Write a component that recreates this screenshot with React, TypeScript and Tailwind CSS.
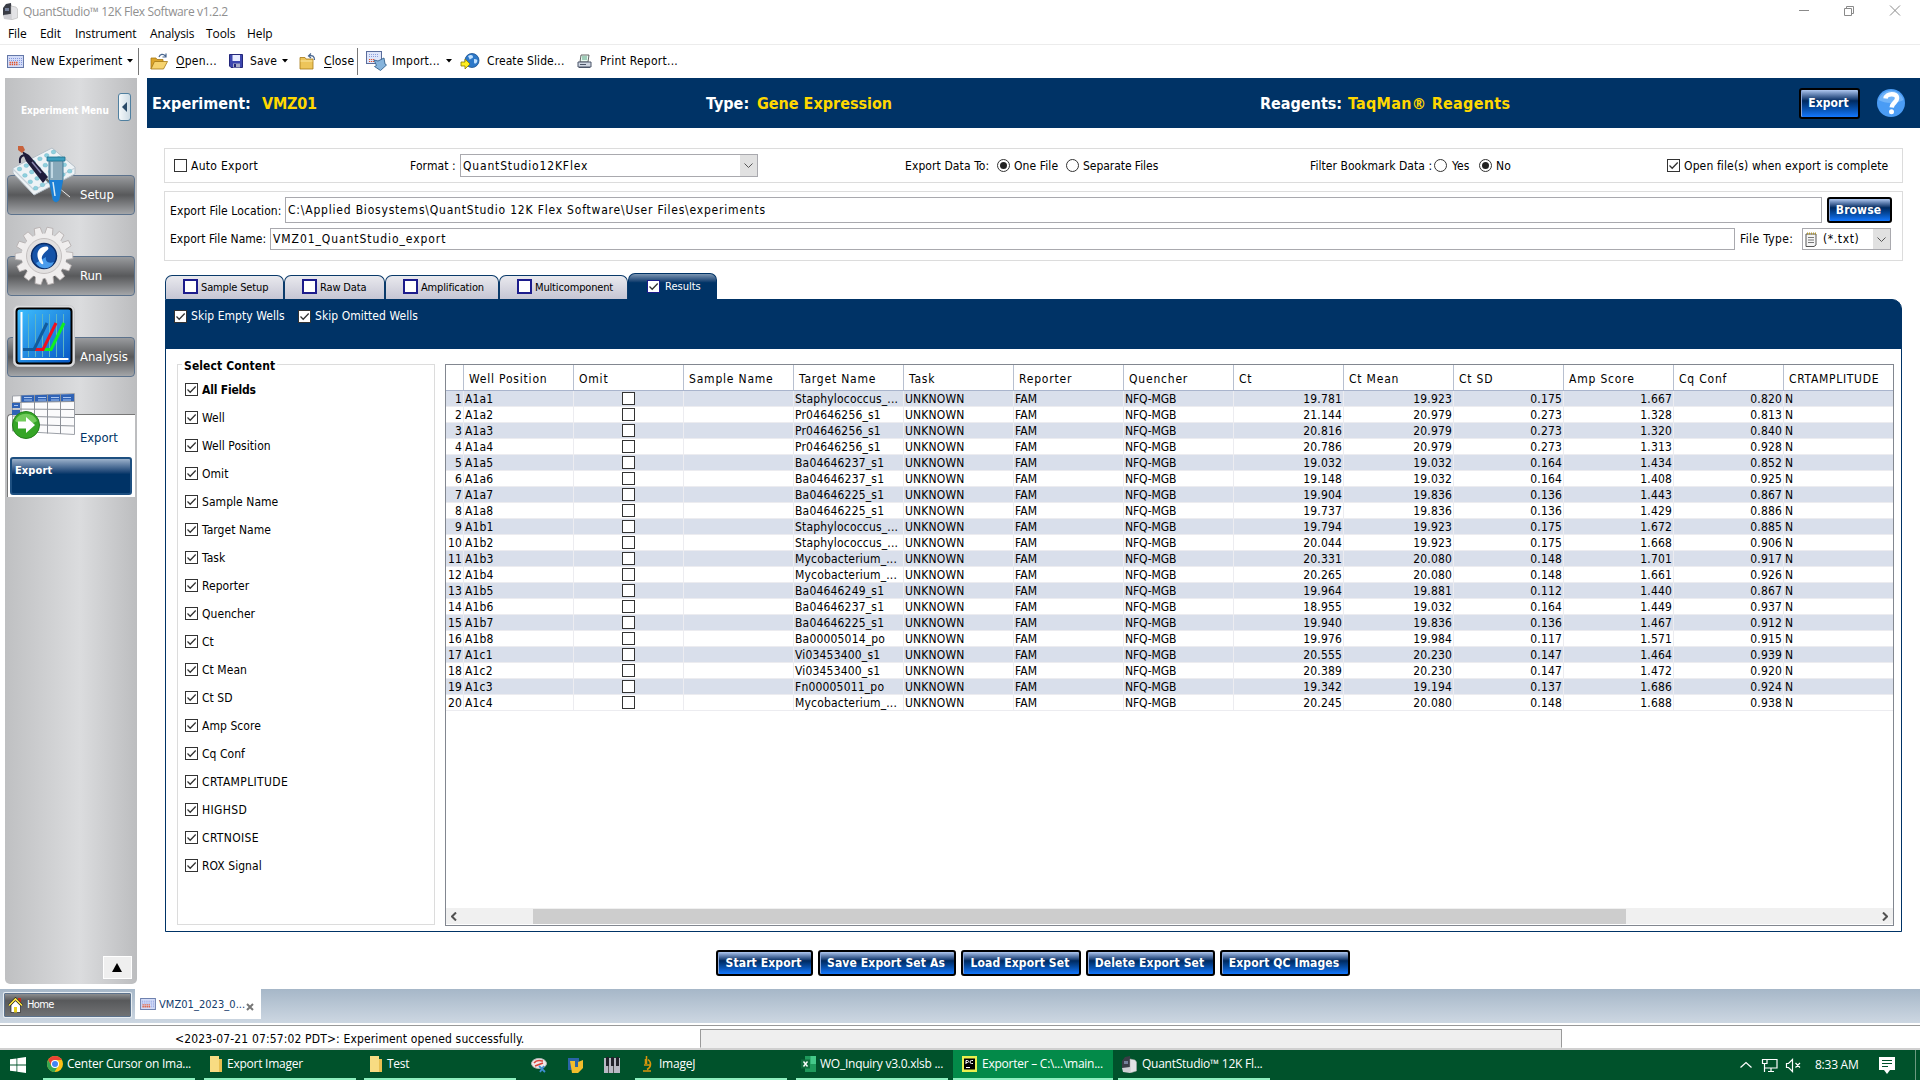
import React from "react";

const targets: [string, string, string, string, string, string, string][] = [
  ["A1a1", "Staphylococcus_...", "19.781", "19.923", "0.175", "1.667", "0.820"],
  ["A1a2", "Pr04646256_s1", "21.144", "20.979", "0.273", "1.328", "0.813"],
  ["A1a3", "Pr04646256_s1", "20.816", "20.979", "0.273", "1.320", "0.840"],
  ["A1a4", "Pr04646256_s1", "20.786", "20.979", "0.273", "1.313", "0.928"],
  ["A1a5", "Ba04646237_s1", "19.032", "19.032", "0.164", "1.434", "0.852"],
  ["A1a6", "Ba04646237_s1", "19.148", "19.032", "0.164", "1.408", "0.925"],
  ["A1a7", "Ba04646225_s1", "19.904", "19.836", "0.136", "1.443", "0.867"],
  ["A1a8", "Ba04646225_s1", "19.737", "19.836", "0.136", "1.429", "0.886"],
  ["A1b1", "Staphylococcus_...", "19.794", "19.923", "0.175", "1.672", "0.885"],
  ["A1b2", "Staphylococcus_...", "20.044", "19.923", "0.175", "1.668", "0.906"],
  ["A1b3", "Mycobacterium_...", "20.331", "20.080", "0.148", "1.701", "0.917"],
  ["A1b4", "Mycobacterium_...", "20.265", "20.080", "0.148", "1.661", "0.926"],
  ["A1b5", "Ba04646249_s1", "19.964", "19.881", "0.112", "1.440", "0.867"],
  ["A1b6", "Ba04646237_s1", "18.955", "19.032", "0.164", "1.449", "0.937"],
  ["A1b7", "Ba04646225_s1", "19.940", "19.836", "0.136", "1.467", "0.912"],
  ["A1b8", "Ba00005014_po", "19.976", "19.984", "0.117", "1.571", "0.915"],
  ["A1c1", "Vi03453400_s1", "20.555", "20.230", "0.147", "1.464", "0.939"],
  ["A1c2", "Vi03453400_s1", "20.389", "20.230", "0.147", "1.472", "0.920"],
  ["A1c3", "Fn00005011_po", "19.342", "19.194", "0.137", "1.686", "0.924"],
  ["A1c4", "Mycobacterium_...", "20.245", "20.080", "0.148", "1.688", "0.938"],
];

const columns = ["Well Position", "Omit", "Sample Name", "Target Name", "Task", "Reporter", "Quencher", "Ct", "Ct Mean", "Ct SD", "Amp Score", "Cq Conf", "CRTAMPLITUDE"];

const fields = ["All Fields", "Well", "Well Position", "Omit", "Sample Name", "Target Name", "Task", "Reporter", "Quencher", "Ct", "Ct Mean", "Ct SD", "Amp Score", "Cq Conf", "CRTAMPLITUDE", "HIGHSD", "CRTNOISE", "ROX Signal"];

function Check({ on = false, className = "border-[#333]" }: { on?: boolean; className?: string }) {
  return (
    <span className={"block size-[13px] shrink-0 border bg-white " + className}>
      {on && (
        <svg viewBox="0 0 11 11" className="block size-[11px]" fill="none" stroke="#333" strokeWidth="1.3">
          <path d="M1.5 5.5 4.2 8.2 9.7 2.5" />
        </svg>
      )}
    </span>
  );
}

function Radio({ on = false }: { on?: boolean }) {
  return (
    <span className="flex size-[13px] shrink-0 items-center justify-center rounded-full border border-[#333] bg-white">
      {on && <span className="size-[7px] rounded-full bg-[#222]" />}
    </span>
  );
}

function Gloss({ children, className = "" }: { children: React.ReactNode; className?: string }) {
  return (
    <button className={"flex shrink-0 items-center justify-center whitespace-nowrap rounded-[3px] border-2 border-black bg-linear-to-b from-[#b0c8f0] via-[#002a60] via-40% to-[#1478ff] pb-px pr-[2px] font-['DejaVu_Sans_Condensed','DejaVu_Sans',sans-serif] text-[12px] font-bold tracking-[0.12px] text-white shadow-[inset_1px_0_0_#8aa6d8] " + className}>
      {children}
    </button>
  );
}

function Caret({ className = "" }: { className?: string }) {
  return (
    <svg viewBox="0 0 6 4" className={"h-[4px] w-[6px] shrink-0 " + className}>
      <path d="M0 0h6L3 3.5z" fill="#000" />
    </svg>
  );
}

function PlateIcon({ className = "h-[13px] w-[17px]" }: { className?: string }) {
  return (
    <svg viewBox="0 0 17 13" className={"shrink-0 " + className}>
      <rect x=".5" y=".5" width="16" height="12" fill="#d3dcf8" stroke="#6478a8" />
      <path d="M2 3.500h13M2 5.500h13M12 7.500h3M12 9.500h3" stroke="#8496dc" strokeDasharray="1 1" />
      <path d="M2.500 7.500h8M2.500 9.500h9" stroke="#e0502a" strokeWidth="1.4" strokeDasharray="1.4 .8" />
    </svg>
  );
}

function FolderIcon({ className = "", close = false }: { className?: string; close?: boolean }) {
  return (
    <svg viewBox="0 0 18 17" className={"h-[17px] w-[18px] shrink-0 " + className}>
      {close ? (
        <>
          <path d="M1 4.500h5l1 1.500h7v10H1z" fill="#edc55a" stroke="#a77915" strokeWidth=".8" />
          <path d="M1.500 8h12" stroke="#fbe7a0" />
          <path d="M15.500 7c0-4-2-5-6-4M12 .5 9.500 3 12 5" fill="none" stroke="#47658f" strokeWidth="1.2" />
        </>
      ) : (
        <>
          <path d="M1 5h5l1 1.500h6V9H5l-4 7z" fill="#dca52a" stroke="#a77915" strokeWidth=".8" />
          <path d="M4.500 8.500h13L13.500 16H1z" fill="#f6d36e" stroke="#a77915" strokeWidth=".8" />
          <path d="M9 4c1-3 4-3.500 6.500-1m.5-2.500v3.500h-3.500" fill="none" stroke="#47658f" strokeWidth="1.2" />
        </>
      )}
    </svg>
  );
}

function SaveIcon({ className = "" }: { className?: string }) {
  return (
    <svg viewBox="0 0 14 14" className={"size-[14px] shrink-0 " + className}>
      <path d="M.5 .5h13v13H2L.5 12z" fill="#3c46ae" stroke="#23277a" />
      <path d="M3.500 1h7.500v6H3.500z" fill="#e8ecff" />
      <path d="M4 9.500h7v4H4z" fill="#a9adc8" />
      <path d="M5 10h2v3H5z" fill="#23277a" />
    </svg>
  );
}

function ImportIcon({ className = "" }: { className?: string }) {
  return (
    <svg viewBox="0 0 21 20" className={"h-[20px] w-[21px] shrink-0 " + className}>
      <rect x=".5" y=".5" width="15" height="12" fill="#dfe6fa" stroke="#5a6d9c" />
      <path d="M3 3.500h10M3 5.500h10" stroke="#8da0dc" strokeDasharray="1 1" />
      <path d="M3 8.500h6M3 10.500h5" stroke="#e0502a" strokeDasharray="1.200 .8" />
      <path d="M8 9l4 1 6-3 1 6 1.500 1-6 5.500-6-4 2-1z" fill="#86b4dc" stroke="#34628f" strokeWidth=".9" />
    </svg>
  );
}

function SlideIcon({ className = "" }: { className?: string }) {
  return (
    <svg viewBox="0 0 20 16" className={"h-[16px] w-[20px] shrink-0 " + className}>
      <circle cx="12" cy="7.500" r="7" fill="#2d78c8" stroke="#174f8f" strokeWidth=".8" />
      <path d="M8 3c3-2 5-1 5 1s-3 1-3 3M14 6c3 0 4 1 3 3s-3 2-3 0z" fill="#bfe0ff" />
      <path d="M1 9h4V6l5 5-5 5v-3H1z" fill="#ffee20" stroke="#8c7a00" strokeWidth=".8" />
    </svg>
  );
}

function PrintIcon({ className = "" }: { className?: string }) {
  return (
    <svg viewBox="0 0 15 15" className={"size-[15px] shrink-0 " + className}>
      <path d="M4 1h8l-1 7H3z" fill="#e9fbf2" stroke="#555" strokeWidth=".9" />
      <path d="M5 3h5M5 5h5" stroke="#57a080" />
      <path d="M1 8h13v5H1z" fill="#cfd6e2" stroke="#4a5568" />
      <path d="M2 13.500h11M3 10.500h6" stroke="#4a5568" />
    </svg>
  );
}

function MachineIcon({ className = "" }: { className?: string }) {
  return (
    <svg viewBox="0 0 16 17" className={"h-[17px] w-[16px] shrink-0 " + className}>
      <path d="M1 5 4 1l5-1 1 11-9 2z" fill="#3a3d46" />
      <path d="m9 3 5 1 1.500 2v9L9 17z" fill="#e3e3e6" stroke="#aaa" strokeWidth=".5" />
      <path d="m1 12 8-1v6l-7-1z" fill="#cfcfd4" />
      <path d="M3 5h4v3H3z" fill="#75809a" />
    </svg>
  );
}

const wells = Array.from({ length: 24 }, (_, i) => {
  const r = Math.floor(i / 6);
  const c = i % 6;
  return [7.5 + c * 6.8 + r * 5.4, 24 - c * 3.4 + r * 6.4];
});

function SetupArt() {
  return (
    <svg viewBox="0 0 64 60" className="h-[60px] w-[64px]">
      <path d="M1 23 40 3l23 19v7L22 50 1 28z" fill="#eef3f6" stroke="#b6c0c8" />
      <path d="M1 24 22 45 63 23" fill="none" stroke="#c7d2da" strokeWidth="1.200" />
      {wells.map(([x, y], i) => (
        <ellipse key={i} cx={x} cy={y} rx="2.300" ry="1.900" fill="#8fd0de" stroke="#6ab4c8" strokeWidth=".4" />
      ))}
      <path d="m10 6 7 4 19 22-5 6-17-22z" fill="#1f1c3a" />
      <path d="m20 17 9 11" stroke="#8a88b0" strokeWidth="1.500" />
      <path d="M8 18c-1-7 3-9 8-7" fill="none" stroke="#1f1c3a" strokeWidth="2" />
      <path d="m6 1 5 0 2 4-3 3-4-3z" fill="#c8623c" />
      <path d="m34 34 25 20" stroke="#666" strokeWidth="2.500" />
      <path d="m36 34 22 18" stroke="#e8e8e8" strokeWidth="1" />
      <path d="M37 14h14v20l-4 21q-3 4-6 0l-4-21z" fill="#8aa9ba" stroke="#3f7896" />
      <path d="M37 35h14l-4 20q-3 4-6 0z" fill="#1b7fd6" />
      <path d="M35 12h18v4H35z" fill="#3d9dbd" stroke="#20708e" strokeWidth=".8" />
      <path d="M40 17v16M41 37l2 14" stroke="#d4e8f2" strokeWidth="1.500" />
    </svg>
  );
}

function RunArt() {
  return (
    <svg viewBox="0 0 60 60" className="size-[60px]">
      <g fill="#f0eeee" stroke="#b5afaf" strokeWidth=".8">
        {Array.from({ length: 14 }, (_, i) => (
          <path key={i} d="M25.800 10 27 1.200h6l1.200 8.800z" transform={`rotate(${(i * 360) / 14 + 12} 30 30)`} />
        ))}
      </g>
      <circle cx="30" cy="30" r="22.500" fill="#efeded" />
      <circle cx="30" cy="30" r="17.500" fill="#e2e0e0" stroke="#c4c0c0" />
      <circle cx="30" cy="30" r="12.500" fill="#1553a8" stroke="#0a2c66" strokeWidth="1.500" />
      <path d="M22 37a10 10 0 0 0 18-1c-6 2-9-1-8-5z" fill="#4a9cec" />
      <path d="M33 20.500c-9-1-13 9-6 17 1.500 1.500 3 .5 2-1.500-3-5 0-8 4.500-12 1.500-1.500 1-3-.5-3.500z" fill="#fff" />
    </svg>
  );
}

function AnalysisArt() {
  return (
    <svg viewBox="0 0 62 62" className="size-[62px]">
      <defs>
        <linearGradient id="chartBg" x1="0" y1="0" x2="1" y2="1">
          <stop offset="0" stopColor="#3fc0ff" />
          <stop offset="1" stopColor="#0656c4" />
        </linearGradient>
      </defs>
      <rect x=".5" y=".5" width="61" height="61" rx="5" fill="#dcdddf" stroke="#c9cacd" />
      <rect x="3.500" y="3.500" width="55" height="55" rx="3" fill="url(#chartBg)" stroke="#000" strokeWidth="2" />
      <path d="M15.500 9v43M22.500 9v43M29.500 9v43M36.500 9v43M43.500 9v43M50.500 9v43" stroke="#5fb5c4" />
      <path d="M8.500 7v47h47" fill="none" stroke="#fff" strokeWidth="2" />
      <path d="M29 44.500h9L51 18" fill="none" stroke="#10f020" strokeWidth="3" />
      <path d="M20 44.500h10L43 18" fill="none" stroke="#f01020" strokeWidth="3" />
      <path d="M10 44.500h11L34 18" fill="none" stroke="#125b9c" strokeWidth="3" />
    </svg>
  );
}

function ExportArt() {
  return (
    <svg viewBox="0 0 63 48" className="h-[48px] w-[63px]">
      <path d="M.5 3 62.500 .5v41L.5 38z" fill="#fbfbfc" stroke="#9da1a8" />
      <path d="M9 2.500 62 1v7.500L9 9z" fill="#2f62b5" />
      <path d="M0 10h8v5H0zM0 17h8v5H0z" fill="#2f62b5" />
      <path d="M12 4.500h8M26 4.500h8M39 4.500h8M51 4.500h8M12 7h8M26 7h8M39 7h8M51 7h8M2 12.500h4" stroke="#a9c5f0" />
      <path d="M0 9.500 62 8.500M0 16l62 .5M0 23l62 1.500M0 31l62 2M9 2.500v36M22.500 2v37.500M35.500 1.500v39M48.500 1v40" stroke="#8d9198" fill="none" />
      <circle cx="14" cy="32" r="13.500" fill="#35a526" stroke="#24801a" />
      <path d="M3 28a12 12 0 0 1 22 0c-5 4-17 4-22 0z" fill="#8cdc70" opacity=".7" />
      <path d="M6 28.500h8V24l9 8-9 8v-4.500H6z" fill="#fff" />
    </svg>
  );
}

function SideItem({ art, label, className }: { art: React.ReactNode; label: string; className: string }) {
  return (
    <div className={"relative flex h-[40px] items-center rounded-[4px] border border-[#5c728c] bg-linear-to-b from-[#9a9c9f] via-[#58595b] via-50% to-[#a4a6a9] " + className}>
      <div className="absolute left-[4px] top-[-31px] flex">{art}</div>
      <span className="mb-[2px] ml-[72px] text-[13px] tracking-[-0.05px] text-white">{label}</span>
    </div>
  );
}

function Tab({ label, className }: { label: string; className: string }) {
  return (
    <div className={"flex h-[24px] shrink-0 items-center rounded-t-[7px] border-x border-t-[1.5px] border-[#0a3a6a] bg-linear-to-b from-[#e9e9ee] to-[#c6c6d4] text-[11px] tracking-[-0.15px] text-black " + className}>
      <span className="mb-[2px] ml-[17px] size-[15px] shrink-0 border-2 border-[#1c1c8c] bg-white" />
      <span className="mb-px ml-[3px] whitespace-nowrap">{label}</span>
    </div>
  );
}

function Task({ icon, label, className }: { icon: React.ReactNode; label: string; className: string }) {
  return (
    <div className={"flex h-[30px] shrink-0 items-center overflow-hidden whitespace-nowrap border-b-2 border-[#8ff0c0] text-[12px] " + className}>
      {icon}
      {label}
    </div>
  );
}

function TaskFolder() {
  return (
    <svg viewBox="0 0 14 16" className="ml-[5px] mr-[4px] h-[16px] w-[14px] shrink-0">
      <path d="M1 0h9v11h3v5H1z" fill="#f8dc82" />
      <path d="M10 3h3v13h-3z" fill="#e8bf50" />
    </svg>
  );
}

export default function App() {
  return (
    <div className="flex h-[1080px] w-[1920px] flex-col overflow-hidden bg-white font-['DejaVu_Sans_Condensed','DejaVu_Sans',sans-serif] text-[12px] leading-none tracking-[0.1px] text-black">
      {/* Title bar */}
      <div className="flex h-[23px] shrink-0 items-center pl-[2px] font-['Open_Sans',sans-serif] text-[#8f8f8f]">
        <MachineIcon />
        <span className="ml-[5px] w-[204px] whitespace-nowrap tracking-[-0.37px]">QuantStudio™ 12K Flex Software v1.2.2</span>
        <svg viewBox="0 0 102 11" className="mb-[3px] ml-auto mr-[19px] h-[11px] w-[102px]" fill="none" stroke="#8a8a8a">
          <path d="M0 5.500h10M45.500 3.500h7v7h-7zM47.500 3.500v-2h7v7h-2M91 .5l10 10M101 .5l-10 10" />
        </svg>
      </div>
      {/* Menu bar */}
      <div className="flex h-[22px] shrink-0 items-center border-b border-[#ececec] pl-[8px] font-['Open_Sans',sans-serif] tracking-[-0.1px]">
        <span className="w-[32px]">File</span>
        <span className="w-[35px]">Edit</span>
        <span className="w-[75px]">Instrument</span>
        <span className="w-[56px]">Analysis</span>
        <span className="w-[41px]">Tools</span>
        <span>Help</span>
      </div>
      {/* Toolbar */}
      <div className="flex h-[33px] shrink-0 items-center whitespace-nowrap pb-px pl-[7px] tracking-[0.15px]">
        <PlateIcon />
        <span className="ml-[7px] w-[92px]">New Experiment</span>
        <Caret className="ml-[4px]" />
        <span className="ml-[5px] h-[27px] w-px bg-[#777]" />
        <FolderIcon className="ml-[11px]" />
        <span className="ml-[8px] w-[44px] tracking-[0.25px]"><u className="underline-offset-2">O</u>pen...</span>
        <SaveIcon className="ml-[9px]" />
        <span className="ml-[7px] w-[28px]">Save</span>
        <Caret className="ml-[4px]" />
        <FolderIcon close className="ml-[11px]" />
        <span className="ml-[7px] w-[29px]"><u className="underline-offset-2">C</u>lose</span>
        <span className="ml-[4px] h-[27px] w-px bg-[#777]" />
        <ImportIcon className="ml-[8px]" />
        <span className="ml-[5px] w-[50px] tracking-[0.2px]">Import...</span>
        <Caret className="ml-[4px]" />
        <SlideIcon className="ml-[8px]" />
        <span className="ml-[7px] w-[77px] tracking-[0.1px]">Create Slide...</span>
        <PrintIcon className="ml-[13px]" />
        <span className="ml-[8px] tracking-[0.25px]">Print Report...</span>
      </div>

      <div className="flex h-[911px] shrink-0">
        {/* Experiment menu */}
        <aside className="ml-[5px] flex h-[906px] w-[132px] shrink-0 flex-col rounded-b-[5px] bg-linear-to-r from-[#bfc0c2] via-[#dbdcde] via-57% to-[#bcbdbf] px-[2px]">
          <div className="flex h-[65px] items-center pl-[14px] pr-[4px]">
            <span className="w-[88px] whitespace-nowrap text-[10px] font-bold tracking-[-0.1px] text-white">Experiment Menu</span>
            <span className="mb-[7px] ml-auto flex h-[28px] w-[13px] items-center justify-center rounded-[3px] border border-[#5080a0] bg-linear-to-r from-[#f4f8fa] to-[#cddbe4]">
              <svg viewBox="0 0 5 10" className="h-[10px] w-[5px]"><path d="M5 0v10L0 5z" fill="#2a4a68" /></svg>
            </span>
          </div>
          <SideItem art={<SetupArt />} label="Setup" className="mt-[32px]" />
          <SideItem art={<span className="ml-[2px]"><RunArt /></span>} label="Run" className="mt-[41px]" />
          <SideItem art={<span className="-mt-[2px] ml-px"><AnalysisArt /></span>} label="Analysis" className="mt-[41px]" />
          <div className="relative mt-[37px] flex h-[83px] flex-col rounded-tl-[4px] border-l border-t border-[#777] bg-white">
            <div className="absolute left-[4px] top-[-22px]"><ExportArt /></div>
            <span className="ml-[72px] mt-[16px] text-[13px] tracking-[-0.1px] text-[#003366]">Export</span>
            <div className="ml-[2px] mt-[13px] h-[38px] w-[122px] rounded-[3px] border-2 border-[#1d4f80] bg-linear-to-b from-[#9db2cb] via-[#003366] via-45% to-[#003366] pl-[3px] pt-[6px] text-[11px] font-bold text-white">Export</div>
          </div>
          <div className="mb-[5px] ml-auto mr-[3px] mt-auto flex h-[23px] w-[29px] shrink-0 items-center justify-center border-[1.5px] border-white bg-[#efefef] pr-px">
            <svg viewBox="0 0 10 9" className="h-[9px] w-[10px]"><path d="M5 0l5 9H0z" fill="#000" /></svg>
          </div>
        </aside>

        <main className="ml-[10px] flex w-[1773px] flex-col">
          {/* Experiment header */}
          <div className="flex h-[50px] shrink-0 items-center whitespace-nowrap bg-[#003366] text-[16px] font-bold tracking-normal text-white">
            <span className="ml-[5px] w-[110px] pt-px">Experiment:</span>
            <span className="w-[444px] pt-px tracking-[-0.2px] text-[#ffd800]">VMZ01</span>
            <span className="w-[51px] pt-px">Type:</span>
            <span className="w-[503px] pt-px text-[#ffd800]">Gene Expression</span>
            <span className="w-[88px] pt-px">Reagents:</span>
            <span className="w-[451px] pt-px tracking-[0.28px] text-[#ffd800]">TaqMan® Reagents</span>
            <Gloss className="h-[31px] w-[61px]">Export</Gloss>
            <svg viewBox="0 0 28 28" className="ml-[17px] size-[28px] shrink-0">
              <circle cx="14" cy="14" r="14" fill="#4a9cf5" />
              <path d="M1.500 11a13 13 0 0 1 25 0c-7 4-18 4-25 0z" fill="#8cc4fb" opacity=".6" />
              <path d="M8.500 9.500C9 4 20.500 3.500 20 9.500c0 4-5 4-5.300 9" fill="none" stroke="#fff" strokeWidth="4.500" />
              <circle cx="14.500" cy="22.800" r="2.500" fill="#fff" />
            </svg>
          </div>

          {/* Export options */}
          <div className="ml-[17px] mt-[20px] flex h-[35px] w-[1739px] shrink-0 items-center whitespace-nowrap border border-[#dcdcdc]">
            <Check className="ml-[9px] border-[#333]" />
            <span className="ml-[4px] w-[219px] tracking-[0.3px]">Auto Export</span>
            <span className="w-[46px]">Format :</span>
            <div className="ml-[4px] flex h-[23px] w-[298px] items-center border border-[#a9a9ae]">
              <span className="ml-[2px] tracking-[0.83px]">QuantStudio12KFlex</span>
              <span className="ml-auto flex h-full w-[17px] items-center justify-center bg-[#e1e1e1]">
                <svg viewBox="0 0 9 5" className="h-[5px] w-[9px]" fill="none" stroke="#555"><path d="M.5 .5l4 4 4-4" /></svg>
              </span>
            </div>
            <span className="ml-[147px] w-[92px]">Export Data To:</span>
            <Radio on />
            <span className="ml-[4px] w-[52px]">One File</span>
            <Radio />
            <span className="ml-[4px] w-[227px] tracking-[-0.05px]">Separate Files</span>
            <span className="w-[124px] tracking-[0.05px]">Filter Bookmark Data :</span>
            <Radio />
            <span className="ml-[5px] w-[27px]">Yes</span>
            <Radio on />
            <span className="ml-[4px] w-[171px]">No</span>
            <Check on />
            <span className="ml-[4px] tracking-[0.13px]">Open file(s) when export is complete</span>
          </div>

          {/* Export file */}
          <div className="ml-[17px] mt-[8px] flex h-[70px] w-[1739px] shrink-0 flex-col whitespace-nowrap border border-[#dcdcdc] pt-[5px]">
            <div className="flex h-[26px] items-center pl-[5px]">
              <span className="w-[115px] pt-px">Export File Location:</span>
              <span className="flex h-[26px] w-[1537px] items-center border border-[#a9a9ae] pl-[2px] tracking-[0.8px]">C:\Applied Biosystems\QuantStudio 12K Flex Software\User Files\experiments</span>
              <Gloss className="ml-[5px] h-[26px] w-[65px]">Browse</Gloss>
            </div>
            <div className="mt-[5px] flex h-[22px] items-center pl-[5px]">
              <span className="w-[100px] tracking-[0.03px]">Export File Name:</span>
              <span className="flex h-[22px] w-[1465px] items-center border border-[#a9a9ae] pl-[2px] tracking-[0.93px]">VMZ01_QuantStudio_export</span>
              <span className="ml-[5px] w-[62px] tracking-[0.35px]">File Type:</span>
              <span className="flex h-[22px] w-[89px] items-center border border-[#a9a9ae]">
                <svg viewBox="0 0 12 15" className="ml-[2px] h-[15px] w-[12px]">
                  <path d="M1 2h10v11l-2 1.500H1z" fill="#f5f5f5" stroke="#555" />
                  <path d="M2 1.500h9" stroke="#b49a30" strokeWidth="2" strokeDasharray="1 1" />
                  <path d="M3 5.500h6M3 8h6M3 10.500h6" stroke="#777" />
                </svg>
                <span className="ml-[6px] tracking-[0.6px]">(*.txt)</span>
                <span className="ml-auto flex h-full w-[17px] items-center justify-center bg-[#e1e1e1]">
                  <svg viewBox="0 0 9 5" className="h-[5px] w-[9px]" fill="none" stroke="#555"><path d="M.5 .5l4 4 4-4" /></svg>
                </span>
              </span>
            </div>
          </div>

          {/* Tabs */}
          <div className="ml-[18px] mt-[12px] flex h-[26px] shrink-0 items-end">
            <Tab label="Sample Setup" className="w-[119px]" />
            <Tab label="Raw Data" className="w-[101px]" />
            <Tab label="Amplification" className="w-[114px]" />
            <Tab label="Multicomponent" className="w-[129px]" />
            <div className="flex h-[26px] w-[89px] items-center rounded-t-[7px] border border-b-0 border-[#003366] bg-linear-to-b from-[#7d97b3] to-[#003366] to-35% text-[11px] tracking-normal text-white">
              <Check on className="ml-[18px] border-[#1c1c8c]" />
              <span className="ml-[5px]">Results</span>
            </div>
          </div>

          <section className="ml-[18px] flex h-[633px] w-[1737px] shrink-0 flex-col rounded-tr-[10px] border border-[#003366] bg-[#003366]">
            <div className="flex h-[32px] shrink-0 items-center whitespace-nowrap pl-[8px] text-white">
              <Check on />
              <span className="ml-[4px] w-[107px] tracking-[0.05px]">Skip Empty Wells</span>
              <Check on />
              <span className="ml-[4px] tracking-[0.05px]">Skip Omitted Wells</span>
            </div>
            <div className="mt-[17px] flex grow bg-white pt-[15px]">
              {/* Column selection */}
              <div className="relative ml-[11px] h-[561px] w-[258px] border border-[#dcdcdc] pl-[7px] pt-[10px]">
                <span className="absolute left-[4px] top-[-5px] whitespace-nowrap bg-white px-[2px] font-bold">Select Content</span>
                {fields.map((f, i) => (
                  <div key={f} className={"flex h-[28px] items-center " + (i === 0 ? "font-bold tracking-[-0.2px]" : f === f.toUpperCase() ? "tracking-[0.35px]" : "tracking-[0.05px]")}>
                    <Check on />
                    <span className="ml-[4px] mt-px">{f}</span>
                  </div>
                ))}
              </div>

              {/* Results table */}
              <div className="ml-[10px] flex h-[562px] w-[1449px] flex-col border border-[#828790]">
                <div className="flex h-[26px] shrink-0 border-b border-[#a9b4cc]">
                  <span className="w-[18px] shrink-0 border-r border-[#b8c0d0]" />
                  {columns.map((c, i) => (
                    <span key={c} className={"flex w-[110px] shrink-0 items-center pl-[5px] pt-[2px] " + (i < 12 ? "border-r border-[#b8c0d0] tracking-[0.8px]" : "tracking-[0.7px]")}>{c}</span>
                  ))}
                </div>
                {targets.map(([well, target, ct, mean, sd, amp, cq], i) => (
                  <div key={well} className={"flex h-[16px] shrink-0 border-b border-[#ececf0] " + (i % 2 ? "bg-white" : "bg-[#d9dfeb]")}>
                    <span className="flex w-[18px] shrink-0 items-center justify-end border-r border-[#ececf0] pr-px">{i + 1}</span>
                    {[well, "", "", target, "UNKNOWN", "FAM", "NFQ-MGB", ct, mean, sd, amp, cq, "N"].map((v, j) => (
                      <span
                        key={j}
                        className={
                          "flex w-[110px] shrink-0 items-center overflow-hidden whitespace-nowrap px-px " +
                          (j < 12 ? "border-r border-[#ececf0] " : "") +
                          (j > 6 && j < 12 ? "justify-end tracking-[0.15px]" : j === 1 ? "justify-center" : j === 6 ? "tracking-[-0.1px]" : j === 3 ? "tracking-[0.18px]" : "tracking-[0.15px]")
                        }
                      >
                        {j === 1 ? <Check /> : v}
                      </span>
                    ))}
                  </div>
                ))}
                <div className="mb-px mt-auto flex h-[16px] shrink-0 items-center bg-[#f0f0f0]">
                  <svg viewBox="0 0 6 9" className="ml-[5px] h-[9px] w-[6px]" fill="none" stroke="#505050" strokeWidth="2"><path d="M5 .5l-4 4 4 4" /></svg>
                  <span className="ml-[76px] h-[15px] w-[1093px] bg-[#cdcdcd]" />
                  <svg viewBox="0 0 6 9" className="ml-auto mr-[5px] h-[9px] w-[6px]" fill="none" stroke="#505050" strokeWidth="2"><path d="M1 .5l4 4-4 4" /></svg>
                </div>
              </div>
            </div>
          </section>

          <div className="ml-[569px] mt-[18px] flex h-[26px] shrink-0 gap-[5px]">
            <Gloss className="w-[97px]">Start Export</Gloss>
            <Gloss className="w-[138px]">Save Export Set As</Gloss>
            <Gloss className="w-[120px]">Load Export Set</Gloss>
            <Gloss className="w-[129px]">Delete Export Set</Gloss>
            <Gloss className="w-[130px]">Export QC Images</Gloss>
          </div>
        </main>
      </div>

      {/* Document tabs */}
      <div className="flex h-[34px] shrink-0 bg-linear-to-b from-[#a6b7c8] to-[#cdd7e2]">
        <div className="ml-[3px] mt-[3px] flex h-[26px] w-[129px] items-center rounded-[2px] border-2 border-[#e8eef2] bg-linear-to-b from-[#8c8e90] via-[#58595b] via-30% to-[#707274] text-[11px] text-white outline outline-[#5c728c] -outline-offset-2">
          <svg viewBox="0 0 15 16" className="ml-[3px] h-[16px] w-[15px]">
            <path d="M10 1h3v5h-3z" fill="#c03020" />
            <path d="M3 8v7.500h9.500V8L7.500 3z" fill="#fff" stroke="#222" strokeWidth=".7" />
            <path d="M1 8.500 7.500 2 14 8.500" fill="none" stroke="#222" strokeWidth="3" />
            <path d="M1 8.500 7.500 2 14 8.500" fill="none" stroke="#ffe840" strokeWidth="1.700" />
            <path d="M6 10h3v5.500H6z" fill="#e8d020" />
          </svg>
          <span className="mb-[2px] ml-[4px] tracking-[-0.6px]">Home</span>
        </div>
        <div className="ml-[3px] flex h-[30px] w-[126px] items-center whitespace-nowrap bg-white text-[11px] text-[#143c6c]">
          <PlateIcon className="ml-[5px] h-[12px] w-[16px]" />
          <span className="ml-[3px] w-[86px] tracking-[0.05px]">VMZ01_2023_0...</span>
          <svg viewBox="0 0 8 8" className="ml-px mt-[5px] size-[8px]" stroke="#777" strokeWidth="2"><path d="M1 1l6 6M7 1 1 7" /></svg>
        </div>
      </div>
      {/* Status bar */}
      <div className="mt-[2px] flex h-[25px] shrink-0 items-start border-b-2 border-t border-b-[#d0d0d0] border-t-[#999]">
        <span className="ml-[175px] w-[525px] whitespace-nowrap pt-[7px] tracking-[0.14px]">&lt;2023-07-21 07:57:02 PDT&gt;: Experiment opened successfully.</span>
        <span className="mt-[3px] h-[19px] w-[862px] border border-[#9a9a9a] border-b-transparent bg-[#efefef]" />
      </div>

      {/* Taskbar */}
      <div className="flex h-[30px] shrink-0 items-center bg-[#00522b] font-['Open_Sans',sans-serif] text-[12px] tracking-[-0.25px] text-white">
        <svg viewBox="0 0 16 16" className="ml-[10px] size-[16px]" fill="#fff">
          <path d="M0 2.300 6.500 1.400v6.200H0zM7.300 1.300 16 0v7.600H7.300zM0 8.400h6.500v6.200L0 13.700zM7.300 8.400H16V16l-8.700-1.300z" />
        </svg>
        <Task
          className="ml-[17px] w-[152px]"
          label="Center Cursor on Ima..."
          icon={
            <svg viewBox="0 0 16 16" className="ml-[4px] mr-[4px] size-[16px] shrink-0">
              <circle cx="8" cy="8" r="8" fill="#fbc116" />
              <path d="M1.100 4A8 8 0 0 1 14.900 4H8L4.500 10z" fill="#ea4335" />
              <path d="M1.100 4A8 8 0 0 0 7.500 16l3.500-6H4.500z" fill="#34a853" />
              <circle cx="8" cy="8" r="4" fill="#fff" />
              <circle cx="8" cy="8" r="3" fill="#4285f4" />
            </svg>
          }
        />
        <Task className="ml-[9px] w-[152px]" label="Export Imager" icon={<TaskFolder />} />
        <Task className="ml-[8px] w-[152px]" label="Test" icon={<TaskFolder />} />
        <svg viewBox="0 0 90 17" className="ml-[15px] h-[17px] w-[90px] shrink-0">
          <ellipse cx="8" cy="6.500" rx="7.500" ry="5" fill="#f0e8e8" stroke="#b8b8b8" />
          <path d="M3 6c3-4 6-2 9-2M4 9l8-3" stroke="#d8443a" strokeWidth="1.500" fill="none" />
          <path d="m8 9 6 6M13 9l-4 6" stroke="#3f8fd2" strokeWidth="1.800" />
          <path d="M37 1h11v12H37z" fill="#2a64a8" />
          <path d="M39 4h5v6h3V5l5-2v8l-5 5h-6z" fill="#f2bd2c" />
          <path d="M73 1h16v15H73z" fill="#b9b9c4" />
          <path d="M75 0h3v9h-3zM80 0h3v9h-3zM85 0h3v9h-3z" fill="#22222a" />
          <path d="M77.500 9v7M82.500 9v7" stroke="#555" />
        </svg>
        <Task
          className="ml-[14px] w-[152px]"
          label="ImageJ"
          icon={
            <svg viewBox="0 0 12 16" className="ml-[6px] mr-[6px] h-[16px] w-[12px] shrink-0" fill="none" stroke="#d9960c" strokeWidth="1.500">
              <path d="M5.500 0v8M4.500 3v5M3 9h6M7 3.500c4 3 3 8-1 10M2 15h8" />
            </svg>
          }
        />
        <Task
          className="ml-[9px] w-[152px]"
          label="WO_Inquiry v3.0.xlsb ..."
          icon={
            <svg viewBox="0 0 15 16" className="ml-[5px] mr-[4px] h-[16px] w-[15px] shrink-0">
              <path d="M4 0h11v16H4z" fill="#1f9a5c" />
              <path d="M9.500 0H15v8H9.500z" fill="#45c98a" />
              <path d="M0 3.500h9v9H0z" fill="#0f6b3c" />
              <path d="m2.500 5.500 4 5M6.500 5.500l-4 5" stroke="#fff" strokeWidth="1.400" />
            </svg>
          }
        />
        <Task
          className="ml-[5px] w-[160px] bg-[#038a49]"
          label="Exporter – C:\...\main..."
          icon={
            <svg viewBox="0 0 15 16" className="ml-[9px] mr-[5px] h-[16px] w-[15px] shrink-0">
              <path d="M0 0h15v16H0z" fill="#e9f04e" />
              <path d="M2 2.500h11v11H2z" fill="#000" />
              <path d="M4 8V4.500h1.500a1 1 0 0 1 0 2H4M11 4.500H9.500a1.500 1.500 0 0 0 0 3H11M4 11.500h4" stroke="#fff" fill="none" />
            </svg>
          }
        />
        <Task className="ml-[5px] w-[152px]" label="QuantStudio™ 12K Fl..." icon={<MachineIcon className="ml-[3px] mr-[5px]" />} />
        <svg viewBox="0 0 62 16" className="ml-auto mr-[13px] h-[16px] w-[62px] shrink-0" fill="none" stroke="#fff" strokeWidth="1.200">
          <path d="m.5 10.500 5.500-5 5.500 5M27 2.500h10v8.500H25M22.500 2.500h4.500v4h-4.500zM24.500 6.500V15M28 14.500h6M31 11v3.500M46.500 6.500h2l4-4v12l-4-4h-2zM55.500 6l4.500 4.500M60 6l-4.500 4.500" />
        </svg>
        <span className="w-[64px] shrink-0 whitespace-nowrap">8:33 AM</span>
        <svg viewBox="0 0 16 17" className="h-[17px] w-[16px] shrink-0">
          <path d="M0 0h16v13h-5l-3 4-3-4H0z" fill="#fff" />
          <path d="M3 3.500h10M3 6.500h10M3 9.500h6" stroke="#00522b" />
        </svg>
        <span className="ml-[20px] mr-[4px] h-full w-px bg-[#6b9a80]" />
      </div>
    </div>
  );
}
